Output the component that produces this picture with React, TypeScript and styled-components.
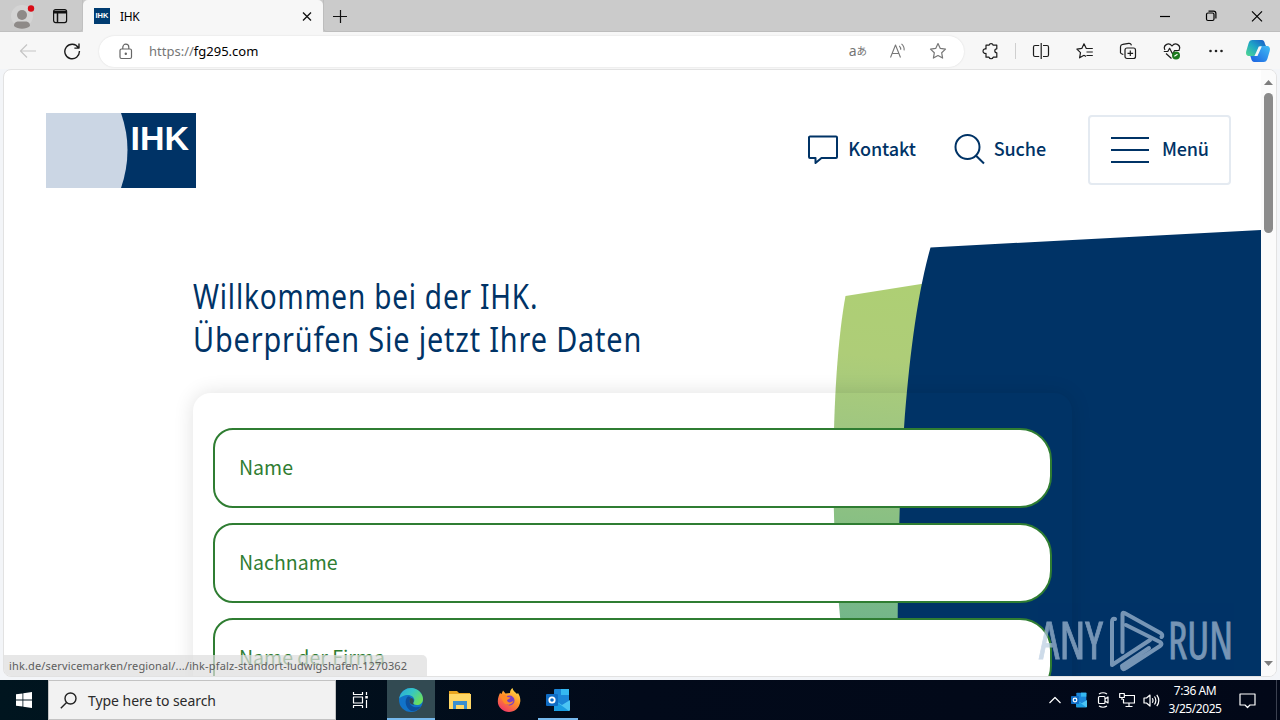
import React from "react";
import styled, { createGlobalStyle } from "styled-components";

const GlobalStyle = createGlobalStyle`
  * {
    box-sizing: border-box;
  }
  body {
    margin: 0;
    overflow: hidden;
    font-family: "Noto Sans", sans-serif;
  }
  svg {
    display: block;
    flex-shrink: 0;
  }
`;

const Desktop = styled.div`
  width: 1280px;
  height: 720px;
  display: flex;
  flex-direction: column;
  overflow: hidden;
  background-color: #f3f5f8;
`;

/* browser chrome */

const TabBar = styled.div`
  height: 32px;
  display: flex;
  background-color: #cbcbcb;
`;

const TabTools = styled.div`
  width: 83px;
  display: flex;
  align-items: center;
  padding-left: 11px;
  gap: 17px;
  border-bottom: 1px solid #c0c0c0;
  border-right: 1px solid #c0c0c0;
  border-bottom-right-radius: 4px;
`;

const Tab = styled.div`
  width: 240px;
  display: flex;
  align-items: center;
  padding: 0 10px 0 11px;
  background-color: #f7f7f7;
  border-radius: 5px 5px 0 0;
  font-size: 12px;
`;

const Favicon = styled.span`
  width: 16px;
  height: 16px;
  margin-right: 10px;
  background-color: #003c71;
  color: #fff;
  font: bold 7.5px/16px "Liberation Sans", sans-serif;
  text-align: center;
`;

const TabTitle = styled.span`
  flex: 1;
  letter-spacing: -0.3px;
`;

const TabRest = styled.div`
  flex: 1;
  display: flex;
  align-items: center;
  padding: 0 17px 0 9px;
  border-bottom: 1px solid #bdbdbd;
  border-left: 1px solid #bdbdbd;
  border-bottom-left-radius: 4px;
`;

const WindowButtons = styled.div`
  display: flex;
  gap: 34px;
  margin-left: auto;
`;

const Toolbar = styled.div`
  height: 37px;
  display: flex;
  align-items: center;
  padding: 1px 9px 0 19px;
  background-color: #f7f7f7;
`;

const NavButtons = styled.div`
  display: flex;
  gap: 26px;
  width: 80px;
`;

const AddressBar = styled.div`
  width: 865px;
  height: 31px;
  display: flex;
  align-items: center;
  padding: 0 17px 0 18px;
  border-radius: 16px;
  background-color: #fff;
  box-shadow: 0 0 2px rgba(0, 0, 0, 0.12);
  font-size: 13px;
`;

const Url = styled.span`
  flex: 1;
  margin-left: 15px;
  color: #767676;
  b {
    font-weight: 400;
    color: #000;
  }
`;

const AddressTools = styled.div`
  display: flex;
  align-items: center;
  gap: 22px;
`;

const Translate = styled.span`
  display: flex;
  align-items: center;
  color: #757575;
  font-size: 14px;
  line-height: 18px;
  small {
    font-family: "Noto Sans CJK JP", sans-serif;
    font-size: 10.5px;
  }
`;

const ToolButtons = styled.div`
  flex: 1;
  display: flex;
  align-items: center;
  justify-content: space-between;
  padding-left: 18px;
`;

const Divider = styled.span`
  width: 1px;
  height: 16px;
  margin: 0 -9px 0 -11px;
  background-color: #cfcfcf;
`;

const CopilotLogo = styled.svg`
  margin-left: -5px;
`;

/* web page */

const Viewport = styled.div`
  position: relative;
  height: 608px;
  margin: 0 3px;
  display: flex;
  border: 1px solid #e2e2e2;
  border-radius: 8px;
  overflow: hidden;
  background-color: #fff;
`;

const Page = styled.div`
  position: relative;
  width: 1257px;
  overflow: hidden;
`;

const Backdrop = styled.svg`
  position: absolute;
  top: 0;
  left: 0;
`;

const Header = styled.header`
  position: relative;
  display: flex;
  align-items: center;
  height: 160px;
  padding: 0 30px 0 42px;
  color: #003366;
  font: 500 18px/24px "Noto Sans CJK JP", "Noto Sans", sans-serif;
`;

const HeaderLink = styled.a<{ $gap: number; $after: number }>`
  display: flex;
  align-items: center;
  gap: ${(props) => props.$gap}px;
  margin-right: ${(props) => props.$after}px;
  padding-bottom: 2px;
  letter-spacing: -0.1px;
`;

const NavLabel = styled.span`
  padding-bottom: 3px;
`;

const MenuButton = styled.div`
  width: 143px;
  height: 70px;
  display: flex;
  align-items: center;
  padding-left: 21px;
  gap: 13px;
  border: 2px solid #e4eaf1;
  border-radius: 4px;
  letter-spacing: -0.2px;
  ${NavLabel} {
    padding-bottom: 5px;
  }
`;

const Spacer = styled.span`
  flex: 1;
`;

const Main = styled.main`
  position: relative;
  padding: 44px 0 0 189px;
`;

const Title = styled.h1`
  margin: 0 0 33px;
  color: #003366;
  font-family: "Noto Sans", sans-serif;
  font-size: 35px;
  font-weight: 400;
  line-height: 43px;
  letter-spacing: 1px;
  white-space: nowrap;
`;

const TitleLine = styled.span<{ $condense: number }>`
  display: block;
  transform: scaleX(${(props) => props.$condense});
  transform-origin: left;
`;

const Card = styled.form`
  width: 879px;
  height: 600px;
  display: flex;
  flex-direction: column;
  gap: 15px;
  padding: 35px 20px;
  border-radius: 18px;
  box-shadow: 0 0 20px rgba(0, 0, 0, 0.12);
`;

const Field = styled.div`
  height: 80px;
  flex-shrink: 0;
  display: flex;
  align-items: center;
  padding: 0 24px 2px;
  border: 2px solid #2f7d32;
  border-radius: 20px 32px 32px 20px;
  background-color: #fff;
  color: #2f7d32;
  font: 400 19.5px/28px "Noto Sans CJK JP", "Noto Sans", sans-serif;
`;

const ScrollBar = styled.div`
  width: 15px;
  display: flex;
  flex-direction: column;
  align-items: center;
  padding: 10px 0;
  background-color: #fbfbfb;
`;

const Thumb = styled.span`
  width: 9px;
  height: 140px;
  margin: 8px 0 auto;
  border-radius: 5px;
  background-color: #8b8b8b;
`;

const StatusBubble = styled.div`
  position: absolute;
  left: 0;
  bottom: 0;
  width: 423px;
  height: 21px;
  padding-left: 5px;
  border-top-right-radius: 5px;
  background-color: rgba(222, 222, 222, 0.72);
  color: #5d5d5d;
  font-size: 11px;
  line-height: 21px;
  letter-spacing: 0.15px;
  white-space: nowrap;
`;

const Watermark = styled.svg`
  position: absolute;
  right: 41px;
  bottom: 0;
`;

const WatermarkText = styled.g`
  font-family: "Open Sans", sans-serif;
  font-size: 51px;
  font-stretch: 75%;
  stroke: #b4c8de;
  stroke-width: 0.8px;
`;

/* taskbar */

const TaskBar = styled.div`
  height: 40px;
  margin-top: auto;
  display: flex;
  background: linear-gradient(90deg, #00151f, #020a1a 50%, #020818);
`;

const TaskItem = styled.div<{ $width?: number; $before?: number; $active?: boolean; $running?: boolean }>`
  width: ${(props) => props.$width ?? 49}px;
  margin-left: ${(props) => props.$before ?? 0}px;
  display: flex;
  align-items: center;
  justify-content: center;
  background-color: ${(props) => (props.$active ? "#324a52" : "transparent")};
  box-shadow: ${(props) => (props.$running ? "inset 0 -2px #76b9ed" : "none")};
`;

const SearchBox = styled.div`
  width: 288px;
  display: flex;
  align-items: center;
  padding-left: 11px;
  gap: 11px;
  border: 1px solid #c3c3c3;
  background-color: #f2f2f2;
  color: #2b2b2b;
  font-size: 14px;
  letter-spacing: -0.05px;
`;

const Tray = styled.div`
  display: flex;
  align-items: center;
  gap: 8px;
  margin-left: auto;
`;

const Clock = styled.div`
  width: 54px;
  color: #fff;
  font-size: 12px;
  line-height: 18px;
  letter-spacing: -0.45px;
  text-align: center;
`;

const Notifications = styled.div`
  height: 40px;
  display: flex;
  align-items: center;
  padding: 0 20px 0 9px;
  margin-right: 3px;
  border-right: 1px solid #3b4150;
`;

interface IIconProps {
  size?: number;
  color?: string;
  stroke?: number;
  children: React.ReactNode;
}

function Icon({ size = 18, color = "#1c1c1c", stroke = 1.2, children }: IIconProps) {
  return (
    <svg
      width={size}
      height={size}
      viewBox={`0 0 ${size} ${size}`}
      fill="none"
      stroke={color}
      strokeWidth={stroke}
      strokeLinejoin="round"
    >
      {children}
    </svg>
  );
}

function BrowserTabs() {
  return (
    <TabBar>
      <TabTools>
        <svg width="24" height="28" viewBox="0 0 24 28">
          <circle cx="11" cy="14" r="11" fill="#d4d4d4" />
          <circle cx="11" cy="13" r="5" fill="#8e8a88" />
          <path d="M3 24c0-5 4-4.500 8-4.500s8-.5 8 4.500c-4 3.500-12 3.500-16 0z" fill="#8e8a88" />
          <circle cx="20" cy="6.500" r="3.200" fill="#d90b16" />
        </svg>
        <Icon size={16} color="#111">
          <rect x="1.6" y="1.6" width="13" height="13" rx="2" />
          <path d="M2 3.4h12.4M2 4.7h12.4M5.5 5v9.5" strokeWidth="1.5" />
        </Icon>
      </TabTools>
      <Tab>
        <Favicon>IHK</Favicon>
        <TabTitle>IHK</TabTitle>
        <Icon size={12} color="#111" stroke={1.3}>
          <path d="M2 2.5l8 8M10 2.5l-8 8" />
        </Icon>
      </Tab>
      <TabRest>
        <Icon size={14} color="#111">
          <path d="M0 7.5h14M7.5 1v13" />
        </Icon>
        <WindowButtons>
          <Icon size={12} color="#000">
            <path d="M1 6.5h10" />
          </Icon>
          <Icon size={12} color="#000">
            <rect x="1.5" y="3" width="7.5" height="7.5" rx="1.5" />
            <path d="M3.5 1.2h5a2.4 2.4 0 0 1 2.4 2.4v5" />
          </Icon>
          <Icon size={12} color="#000">
            <path d="M1 1.3l10 10M11 1.3l-10 10" />
          </Icon>
        </WindowButtons>
      </TabRest>
    </TabBar>
  );
}

function AddressRow() {
  return (
    <Toolbar>
      <NavButtons>
        <Icon color="#c6c6c6">
          <path d="M17 9H1.5M8 2.5L1.5 9L8 15.5" />
        </Icon>
        <Icon stroke={1.4}>
          <path d="M15.3 5.6A7.3 7.3 0 1 0 16.4 9M16 1.5v4.6h-4.6" />
        </Icon>
      </NavButtons>
      <AddressBar>
        <Icon size={17} color="#666">
          <rect x="3" y="6" width="11.5" height="9.5" rx="1.5" />
          <path d="M5.8 6V4.2a3 3 0 0 1 6 0V6" />
          <circle cx="8.8" cy="10.8" r=".6" fill="#666" />
        </Icon>
        <Url>
          https://<b>fg295.com</b>
        </Url>
        <AddressTools>
          <Translate>
            a<small>あ</small>
          </Translate>
          <Icon color="#777" stroke={1.1}>
            <path d="M1.500 15.500L6.500 3l5 12.500M3.200 11.500h6.600M10.300 3.800a5 5 0 0 1 1.400 4M12.500 1.800a7.500 7.500 0 0 1 2.600 6.600" />
          </Icon>
          <Icon color="#777">
            <path d="M9 1.500l2.300 4.900 5.200.7-3.800 3.700.9 5.300L9 13.500l-4.600 2.600.9-5.300L1.500 7.100l5.200-.7z" />
          </Icon>
        </AddressTools>
      </AddressBar>
      <ToolButtons>
        <Icon>
          <path d="M4 3.200h3a2.200 2.200 0 0 1 4.200 0h3.600v3.600a2 2 0 0 0 0 4v4.400h-3.600a2.200 2.200 0 0 1-4.200 0H4v-3.800a2.300 2.300 0 1 1 0-4.400z" />
        </Icon>
        <Divider />
        <Icon>
          <path d="M7.200 3.500H3A1.500 1.500 0 0 0 1.500 5v8A1.500 1.500 0 0 0 3 14.500h4.200M11 3.500h4A1.500 1.500 0 0 1 16.500 5v8a1.500 1.500 0 0 1-1.500 1.500h-4M9.200 1v16" />
        </Icon>
        <Icon>
          <path d="M11 6.500h-.7L8 1.800 5.800 6.400l-4.900.7 3.600 3.500-.9 5.200L8 13.300M9.800 6.500h7M10.500 10h6.300M10.500 13.500h6.300M8 13.300l2 1.200" />
        </Icon>
        <Icon>
          <rect x="6" y="6" width="10.5" height="10.5" rx="2" />
          <path d="M11.300 8.500v5.600M8.500 11.300h5.600M4.300 12.500L3 12a2 2 0 0 1-1.500-2.600V4.800A2.500 2.500 0 0 1 3.700 2.400l6-1a2.300 2.300 0 0 1 2.700 2" />
        </Icon>
        <Icon>
          <path d="M2 8C-.5 3.500 5.500-.5 9 4c3.500-4.500 9.500-.5 7 4M.8 9.500h4l1.800-3.200 3 5.700 2-3.500h5M3 11.500l5.500 5" />
          <circle cx="13" cy="13.5" r="4" fill="#1b7a1e" stroke="none" />
          <path d="M11.300 14.300l3.200-2" stroke="#fff" />
        </Icon>
        <Icon>
          <g fill="#222" stroke="none">
            <circle cx="4.5" cy="9" r="1.3" />
            <circle cx="10" cy="9" r="1.3" />
            <circle cx="15.5" cy="9" r="1.3" />
          </g>
        </Icon>
        <CopilotLogo width="26" height="24" viewBox="0 0 26 24">
          <defs>
            <linearGradient id="copilotA" x1="0" y1="1" x2="1" y2="0">
              <stop offset="0" stopColor="#52d98f" />
              <stop offset=".5" stopColor="#1ea6c6" />
              <stop offset="1" stopColor="#1a55c9" />
            </linearGradient>
            <linearGradient id="copilotB" x1="0" y1="1" x2="1" y2="0">
              <stop offset="0" stopColor="#1a5fe0" />
              <stop offset="1" stopColor="#40bdf5" />
            </linearGradient>
          </defs>
          <path
            d="M7.500 1h9c2.500 0 3 2 3.500 4l1 2h-4c-2.500 0-3.500 1.500-4.200 4l-1 3.500c-.5 1.500-1.300 2.500-3 2.500H4.500c-3 0-4-2-3.200-5L3.500 4.500C4.200 2 5.300 1 7.500 1z"
            fill="url(#copilotA)"
          />
          <path
            d="M18.500 23h-9c-2.300 0-3-2-3.500-4l-.7-2h3.500c2.500 0 3.500-1.500 4.200-4l1-3.500c.6-1.600 1.500-2.500 3.200-2.500h4.300c3 0 4 2 3.200 5l-2.200 7.500c-.8 2.500-1.800 3.500-4 3.500z"
            fill="url(#copilotB)"
          />
          <path d="M13.800 7.500h3l-4.300 9.500h-3z" fill="#f7f7f7" />
        </CopilotLogo>
      </ToolButtons>
    </Toolbar>
  );
}

function PageBackdrop() {
  return (
    <Backdrop width="1257" height="606" viewBox="4 70 1257 606">
      <defs>
        <linearGradient id="leaf" gradientUnits="userSpaceOnUse" x1="880" y1="285" x2="850" y2="640">
          <stop offset="0" stopColor="#aecf74" />
          <stop offset=".2" stopColor="#aecd78" />
          <stop offset=".4" stopColor="#a0c780" />
          <stop offset=".65" stopColor="#8ac083" />
          <stop offset="1" stopColor="#6fb48b" />
        </linearGradient>
      </defs>
      <path d="M845.500 296L940 281V677H848C828 560 830 380 845.500 296z" fill="url(#leaf)" />
      <path
        d="M930.500 247.500L1261 230V677H897.500C897.500 580 899 490 904 428C909 360 917 295 930.500 247.500z"
        fill="#003366"
      />
    </Backdrop>
  );
}

function PageHeader() {
  return (
    <Header>
      <svg width="150" height="75" viewBox="0 0 150 75">
        <rect width="150" height="75" fill="#003366" />
        <path d="M0 0h75q13 37 0 75H0z" fill="#cbd6e4" />
        <text
          x="84.5"
          y="36.5"
          fill="#fff"
          fontFamily="Liberation Sans"
          fontWeight="bold"
          fontSize="34"
          textLength="58.5"
          lengthAdjust="spacingAndGlyphs"
        >
          IHK
        </text>
      </svg>
      <Spacer />
      <HeaderLink $gap={9} $after={37}>
        <Icon size={32} color="#003366" stroke={2}>
          <path d="M3 3.500h26a1 1 0 0 1 1 1V24a1 1 0 0 1-1 1H14.500L8.500 30v-5H3a1 1 0 0 1-1-1V4.500a1 1 0 0 1 1-1z" />
        </Icon>
        <NavLabel>Kontakt</NavLabel>
      </HeaderLink>
      <HeaderLink $gap={9} $after={42}>
        <Icon size={32} color="#003366" stroke={2}>
          <circle cx="14.5" cy="14" r="12" />
          <path d="M22.800 22.500L31 30.500" />
        </Icon>
        <NavLabel>Suche</NavLabel>
      </HeaderLink>
      <MenuButton>
        <svg width="38" height="28" viewBox="0 0 38 28" stroke="#003366" strokeWidth="2">
          <path d="M0 2h38M0 14h38M0 26h38" />
        </svg>
        <NavLabel>Menü</NavLabel>
      </MenuButton>
    </Header>
  );
}

function AnyRunMark() {
  return (
    <Watermark width="200" height="70" viewBox="1035 606 200 70" fill="#b4c8de" opacity="0.66">
      <WatermarkText>
        <text x="1039" y="659" textLength="64" lengthAdjust="spacingAndGlyphs">
          ANY
        </text>
        <text x="1168" y="659" textLength="65" lengthAdjust="spacingAndGlyphs">
          RUN
        </text>
      </WatermarkText>
      <g fill="none" stroke="#b4c8de" strokeWidth="4" strokeLinejoin="round" strokeLinecap="round">
        <path d="M1115 619q-3-1-3 3v43l38-25" />
        <path d="M1122.500 652V614q0-2 2-1l36 20q3 2 1 4M1126 625l34 17q3 2 0 4l-34 22q-4 3-4-2l27-18" />
      </g>
    </Watermark>
  );
}

function OutlookIcon({ size }: { size: number }) {
  return (
    <svg width={size} height={size} viewBox="0 0 24 24">
      <rect x="8" y="1" width="15" height="19" rx="1" fill="#1b86d8" />
      <path d="M15 1h8v6h-8z" fill="#35b8f1" />
      <path d="M8 12l8 5 8-5v10a1 1 0 0 1-1 1H8z" fill="#4cc5f4" />
      <path d="M8 12l15 11H9a1 1 0 0 1-1-1z" fill="#1b9de2" />
      <rect x="0" y="6" width="12" height="12" rx="1" fill="#0f6cc4" />
      <circle cx="6" cy="12" r="2.7" fill="none" stroke="#fff" strokeWidth="1.8" />
    </svg>
  );
}

function WindowsTaskBar() {
  return (
    <TaskBar>
      <TaskItem $width={48}>
        <svg width="16" height="16" viewBox="0 0 16 16" fill="#fff">
          <path d="M0 2.300L6.500 1.400v6.200H0zM7.300 1.300L16 0v7.600H7.300zM0 8.400h6.500v6.200L0 13.700zM7.300 8.400H16V16l-8.700-1.300z" />
        </svg>
      </TaskItem>
      <SearchBox>
        <Icon size={17} color="#222" stroke={1.4}>
          <circle cx="10.5" cy="6.5" r="5.5" />
          <path d="M6.600 10.400L.8 16.300" />
        </Icon>
        Type here to search
      </SearchBox>
      <TaskItem $width={47} $before={1}>
        <Icon size={18} color="#fff">
          <path d="M1.500 1v2.500h9V1M1.500 17v-2.500h9V17M1.500 6h9v6h-9zM14.500 1v3M14.500 9v8" />
          <rect x="13.3" y="5" width="2.5" height="2.5" fill="#fff" stroke="none" />
        </Icon>
      </TaskItem>
      <TaskItem $width={48} $before={3} $active $running>
        <svg width="24" height="24" viewBox="0 0 24 24">
          <defs>
            <linearGradient id="edgeTop" x1="0" y1="0" x2="1" y2=".6">
              <stop offset="0" stopColor="#2aa5dc" />
              <stop offset=".5" stopColor="#35c6c4" />
              <stop offset="1" stopColor="#6bdf5c" />
            </linearGradient>
          </defs>
          <circle cx="12" cy="12" r="12" fill="#1173c9" />
          <path
            d="M.2 10.500C2 2 9-1 14.500.3 21 1.800 24 7 24 11c0 4-3 6-6 6s-4.500-1-3.500-2.500C17 11 13.500 7 9 7 5 7 1.500 9 .2 10.500z"
            fill="url(#edgeTop)"
          />
          <path
            d="M9 8.500c-4 3-3 11 3 14.500 5 .5 8-2 9.800-4.500-5 2-11 0-11.300-5 0-2 1-3 1.500-3.500-.5-1-1.500-1.500-3-1.500z"
            fill="#0d4f9c"
          />
          <path
            d="M12 10c2 0 3 1.500 2.700 3.500-1 1.500-.7 2.500.8 3.200-3 .3-5-1.200-5-3.500 0-1.700.7-2.600 1.500-3.200z"
            fill="#324a52"
          />
        </svg>
      </TaskItem>
      <TaskItem>
        <svg width="22" height="20" viewBox="0 0 22 20">
          <path d="M0 1h8l2 2h11v16H0z" fill="#e9a520" />
          <path d="M0 4h22v15H0z" fill="#ffd766" />
          <path d="M4 11h14v8h-3v-4H7v4H4z" fill="#3a8fd0" />
        </svg>
      </TaskItem>
      <TaskItem>
        <svg width="24" height="24" viewBox="0 0 24 24">
          <defs>
            <linearGradient id="fox" x1=".8" y1="0" x2=".2" y2="1">
              <stop offset="0" stopColor="#ffe04a" />
              <stop offset=".45" stopColor="#ff9328" />
              <stop offset="1" stopColor="#f0306c" />
            </linearGradient>
          </defs>
          <path
            d="M3 5l1.500 1L6 2.500l2.500 3L13 5c0-2 .8-4 2.500-5 .5 3 3 4 4.500 6l1-1c2 3 2.500 6 2.300 8.500C22.500 20 17.500 24 12 24S.8 19.500.8 13.500C.8 10 2 7 3 5z"
            fill="url(#fox)"
          />
          <circle cx="12.5" cy="12.5" r="5" fill="#7b3fc4" />
          <path d="M3 8c3-2 6-1.500 7.500 1l3 .5c-1 2-3 1.500-3.500 3 1 3 5 2 6.500 0-.5 5-9 6-11 0z" fill="#ff8a26" />
        </svg>
      </TaskItem>
      <TaskItem $width={40} $before={5} $running>
        <OutlookIcon size={24} />
      </TaskItem>
      <Tray>
        <Icon size={16} color="#fff">
          <path d="M2.500 11L8 5.500l5.500 5.500" />
        </Icon>
        <OutlookIcon size={16} />
        <Icon size={16} color="#fff">
          <rect x="3.5" y="4.5" width="6.5" height="7" rx="1" />
          <path d="M10 7l3-2v6l-3-2M4 2q4-2.500 8 0M4 14q4 2.500 8 0" />
        </Icon>
        <Icon size={16} color="#fff">
          <path d="M5.500 3.500h10v7.500h-11V7M10 11v3.500M6.500 14.500h7" />
          <path d="M.7 1.500h4.600v4H.7zM3 5.500V8" />
        </Icon>
        <Icon size={17} color="#fff">
          <path d="M1 6v5h2.500L7 14V3L3.500 6zM9.300 6.300q1.400 2.200 0 4.400M11.500 4.500q2.700 4 0 8M13.800 2.800q4 5.700 0 11.400" />
        </Icon>
        <Clock>
          7:36 AM
          <br />
          3/25/2025
        </Clock>
        <Notifications>
          <Icon size={17} color="#fff">
            <path d="M1 2h15v11h-5l-2.500 2.500L6 13H1z" />
          </Icon>
        </Notifications>
      </Tray>
    </TaskBar>
  );
}

const fields = ["Name", "Nachname", "Name der Firma"];

function App() {
  return (
    <Desktop>
      <GlobalStyle />
      <BrowserTabs />
      <AddressRow />
      <Viewport>
        <Page>
          <PageBackdrop />
          <PageHeader />
          <Main>
            <Title>
              <TitleLine $condense={0.8}>Willkommen bei der IHK.</TitleLine>
              <TitleLine $condense={0.825}>Überprüfen Sie jetzt Ihre Daten</TitleLine>
            </Title>
            <Card>
              {fields.map((field) => (
                <Field key={field}>{field}</Field>
              ))}
            </Card>
          </Main>
        </Page>
        <ScrollBar>
          <svg width="9" height="5" viewBox="0 0 9 5" fill="#7d7d7d">
            <path d="M0 5L4.500 0 9 5z" />
          </svg>
          <Thumb />
          <svg width="9" height="5" viewBox="0 0 9 5" fill="#7d7d7d">
            <path d="M0 0L4.500 5 9 0z" />
          </svg>
        </ScrollBar>
        <AnyRunMark />
        <StatusBubble>
          ihk.de/servicemarken/regional/.../ihk-pfalz-standort-ludwigshafen-1270362
        </StatusBubble>
      </Viewport>
      <WindowsTaskBar />
    </Desktop>
  );
}

export default App;
